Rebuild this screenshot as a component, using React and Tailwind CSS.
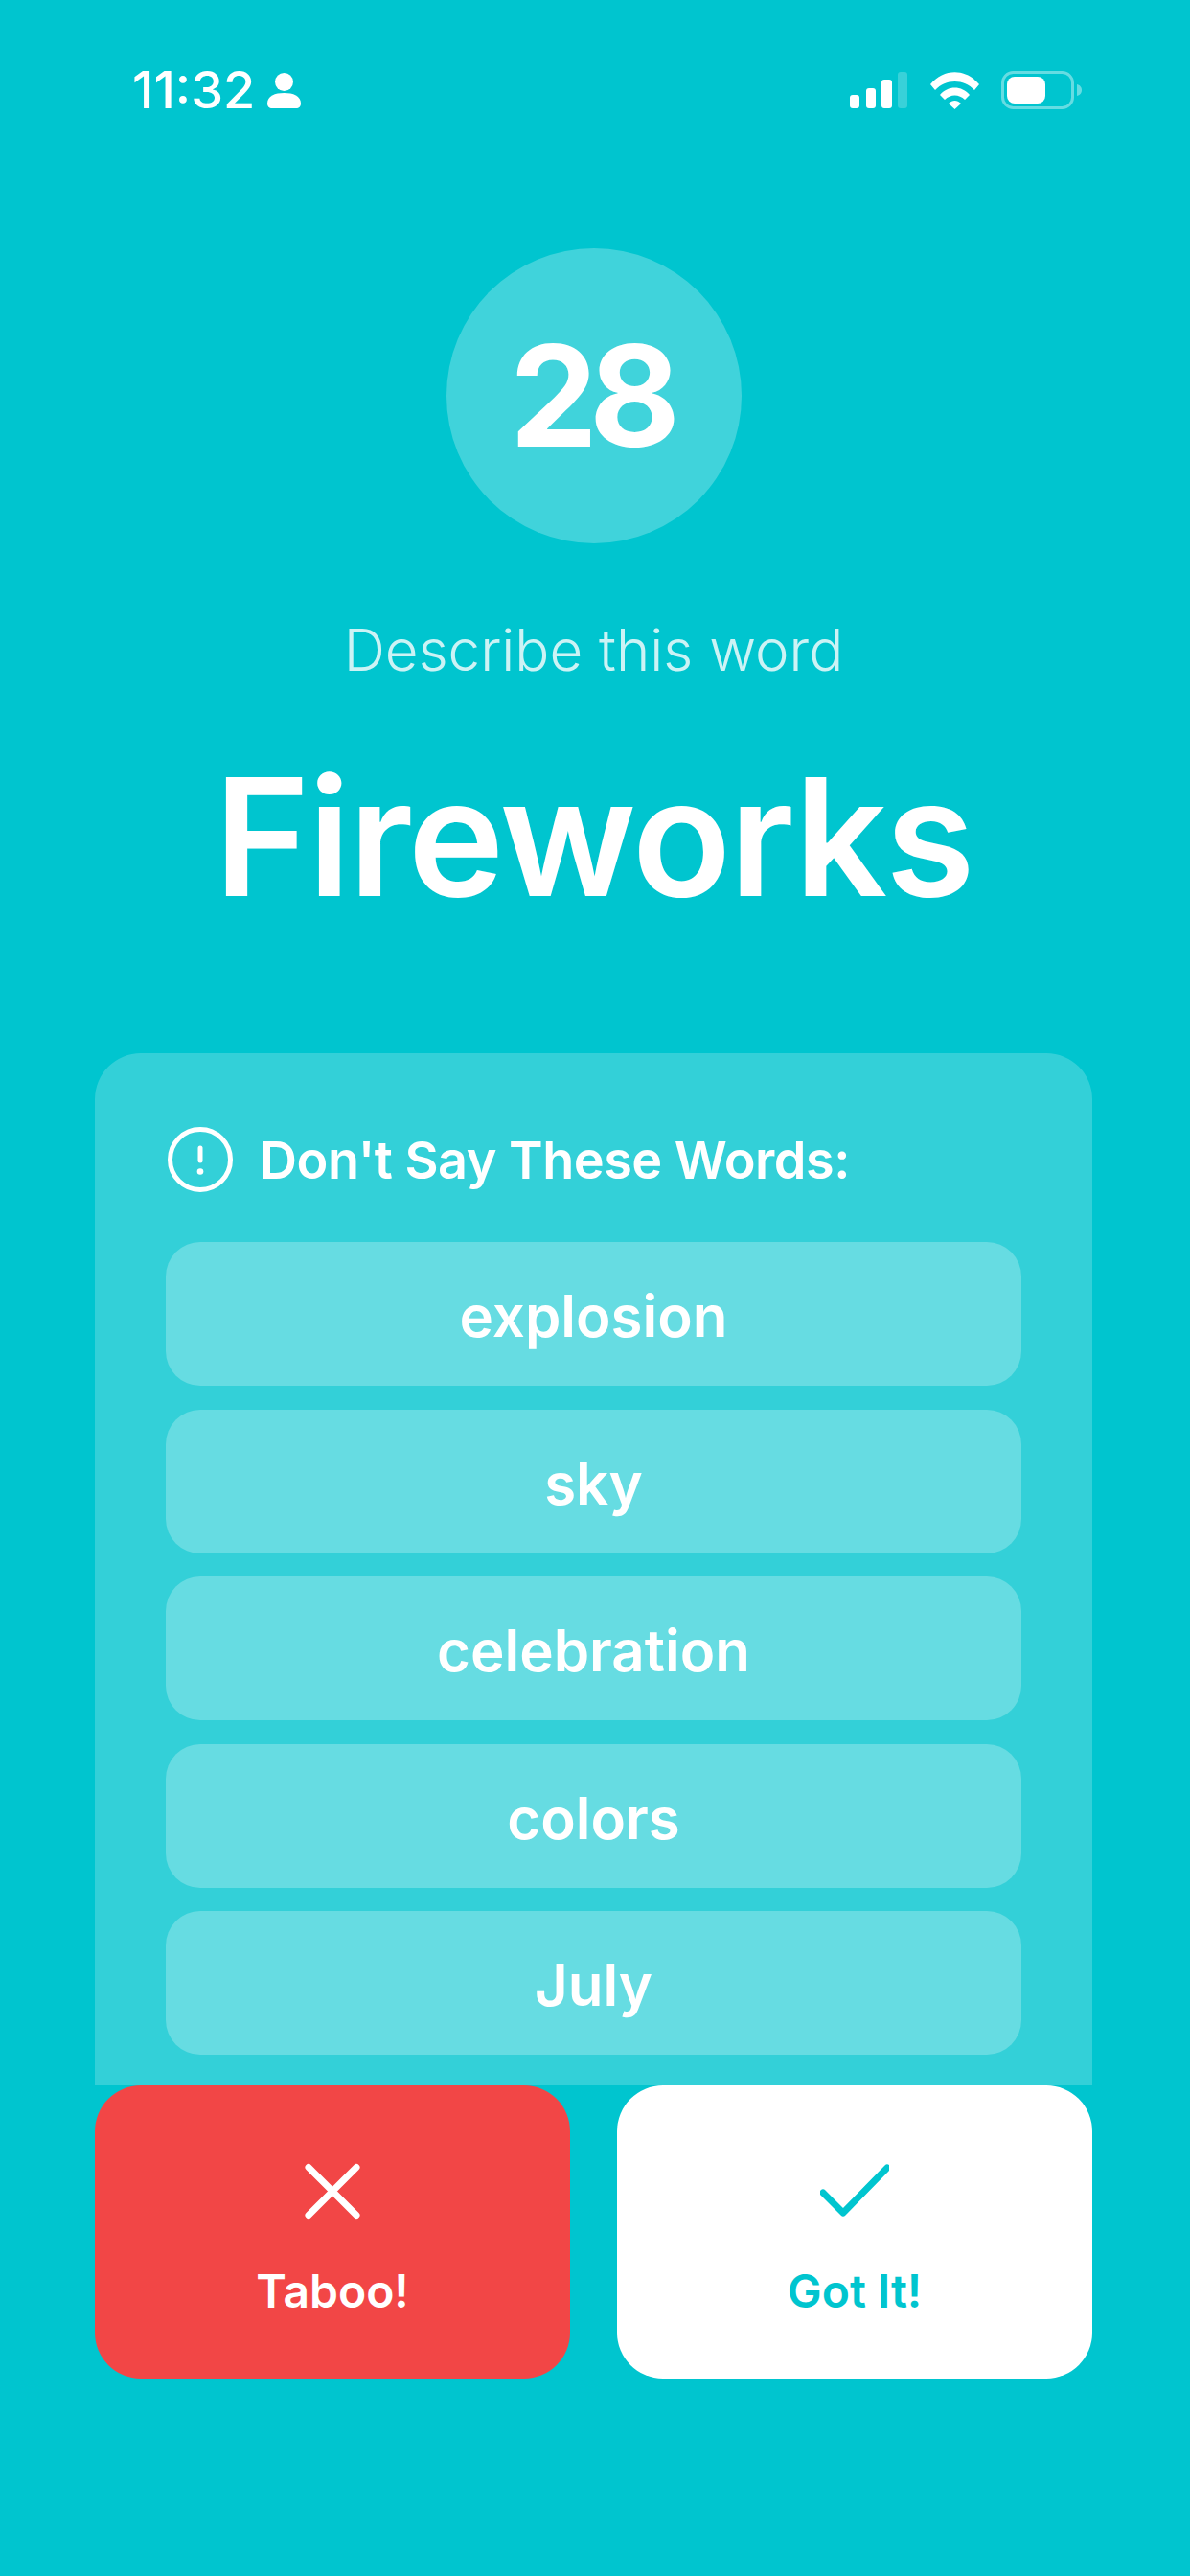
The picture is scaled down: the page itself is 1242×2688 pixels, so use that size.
import React from "react";

const words = ["explosion", "sky", "celebration", "colors", "July"];

function StatusIcons() {
  return (
    <div className="flex items-start">
      <svg width="60" height="40" viewBox="0 0 60 40" className="block mt-[1px]">
        <rect x="0" y="24" width="10" height="14" rx="3" fill="#fff" />
        <rect x="17" y="17" width="10" height="21" rx="3" fill="#fff" />
        <rect x="33" y="8" width="11" height="30" rx="3" fill="#fff" />
        <rect x="50" y="0" width="10" height="38" rx="3" fill="#fff" fillOpacity="0.22" />
      </svg>
      <svg width="52" height="40" viewBox="0 0 52 40" className="block ml-[24px] mt-[1px]">
        <path d="M0 13 C14 -4 37 -4 51 13 L46 19 C35 7 16 7 5 19 Z" fill="#fff" />
        <path d="M10 24 C18 14 33 14 41 24 L36 29 C30 23 21 23 15 29 Z" fill="#fff" />
        <path d="M19 33 C23 29 28 29 32 33 L25.5 39 Z" fill="#fff" />
      </svg>
      <svg width="85" height="40" viewBox="0 0 85 40" className="block ml-[22px]">
        <rect x="1.5" y="1.5" width="73" height="37" rx="11" fill="none" stroke="#fff" strokeOpacity="0.4" strokeWidth="3" />
        <rect x="6" y="6" width="40" height="28" rx="8" fill="#fff" />
        <path d="M79 14 C83 15 84 18 84 20 C84 22 83 25 79 26 Z" fill="#fff" fillOpacity="0.4" />
      </svg>
    </div>
  );
}

export default function App() {
  return (
    <div className="w-[1242px] h-[2688px] overflow-hidden bg-[#00c5cf] flex flex-col font-['Inter',sans-serif] text-white">
      <div className="h-[186px] shrink-0 flex justify-between items-start pl-[138px] pr-[112px] pt-[74px]">
        <div className="flex items-start">
          <span className="text-[54px] leading-[40px] font-medium">11:32</span>
          <svg width="35" height="38" viewBox="0 0 35 38" className="block ml-[13px] mt-[2px]">
            <circle cx="17.5" cy="9.5" r="9.5" fill="#fff" />
            <path d="M0 32 C0 24 8 21 17.5 21 C27 21 35 24 35 32 C35 35 33 37 30 37 L5 37 C2 37 0 35 0 32 Z" fill="#fff" />
          </svg>
        </div>
        <StatusIcons />
      </div>

      <div className="w-[1239px] flex flex-col px-[99px]">
        <div className="w-[308px] h-[308px] shrink-0 self-center rounded-full bg-white/25 flex items-center justify-center mt-[73px]">
          <span className="text-[146px] leading-none font-bold tracking-[-9px] mr-[6px]">28</span>
        </div>

        <div className="text-center text-[60px] leading-[72px] font-[350] text-white/80 mt-[75px]">Describe this word</div>
        <div className="text-center text-[170px] leading-[204px] font-semibold mt-[57px] tracking-[-2px]">Fireworks</div>

        <div className="mt-[124px] h-[1077px] shrink-0 rounded-t-[48px] bg-white/20 px-[74px] pt-[75px] flex flex-col">
          <div className="flex items-center gap-[26px] h-[72px]">
            <svg width="72" height="72" viewBox="0 0 72 72" fill="none" stroke="#fff" className="block">
              <circle cx="36" cy="36" r="31.5" strokeWidth="5" />
              <path d="M36 24 V37" strokeWidth="5" strokeLinecap="round" />
              <circle cx="36" cy="48.5" r="3.3" fill="#fff" stroke="none" />
            </svg>
            <span className="text-[54px] leading-[72px] font-semibold tracking-[-0.5px] pt-[2px]">Don't Say These Words:</span>
          </div>
          <div className="flex flex-col gap-[24.5px] mt-[50px]">
            {words.map((w) => (
              <div key={w} className="h-[150px] rounded-[36px] bg-white/25 flex items-center justify-center text-[60px] font-semibold pt-[4px]">
                {w}
              </div>
            ))}
          </div>
        </div>

        <div className="flex gap-[49px] h-[306px] shrink-0">
          <div className="flex-1 rounded-[48px] bg-[#f24646] flex flex-col items-center pt-[75px]">
            <svg width="72" height="72" viewBox="0 0 72 72" fill="none" stroke="#fff" strokeWidth="7" strokeLinecap="round" className="block">
              <path d="M11 10.5 L61 60.5 M61 10.5 L11 60.5" />
            </svg>
            <span className="text-[48px] leading-[60px] font-semibold mt-[38px]">Taboo!</span>
          </div>
          <div className="flex-1 rounded-[48px] bg-white flex flex-col items-center pt-[75px] text-[#00c5cf]">
            <svg width="72" height="72" viewBox="0 0 72 72" fill="none" stroke="#00c5cf" strokeWidth="7" strokeLinecap="round" strokeLinejoin="round" className="block">
              <path d="M3 37 L24 58 L70 11" />
            </svg>
            <span className="text-[48px] leading-[60px] font-semibold mt-[38px]">Got It!</span>
          </div>
        </div>
      </div>
    </div>
  );
}
